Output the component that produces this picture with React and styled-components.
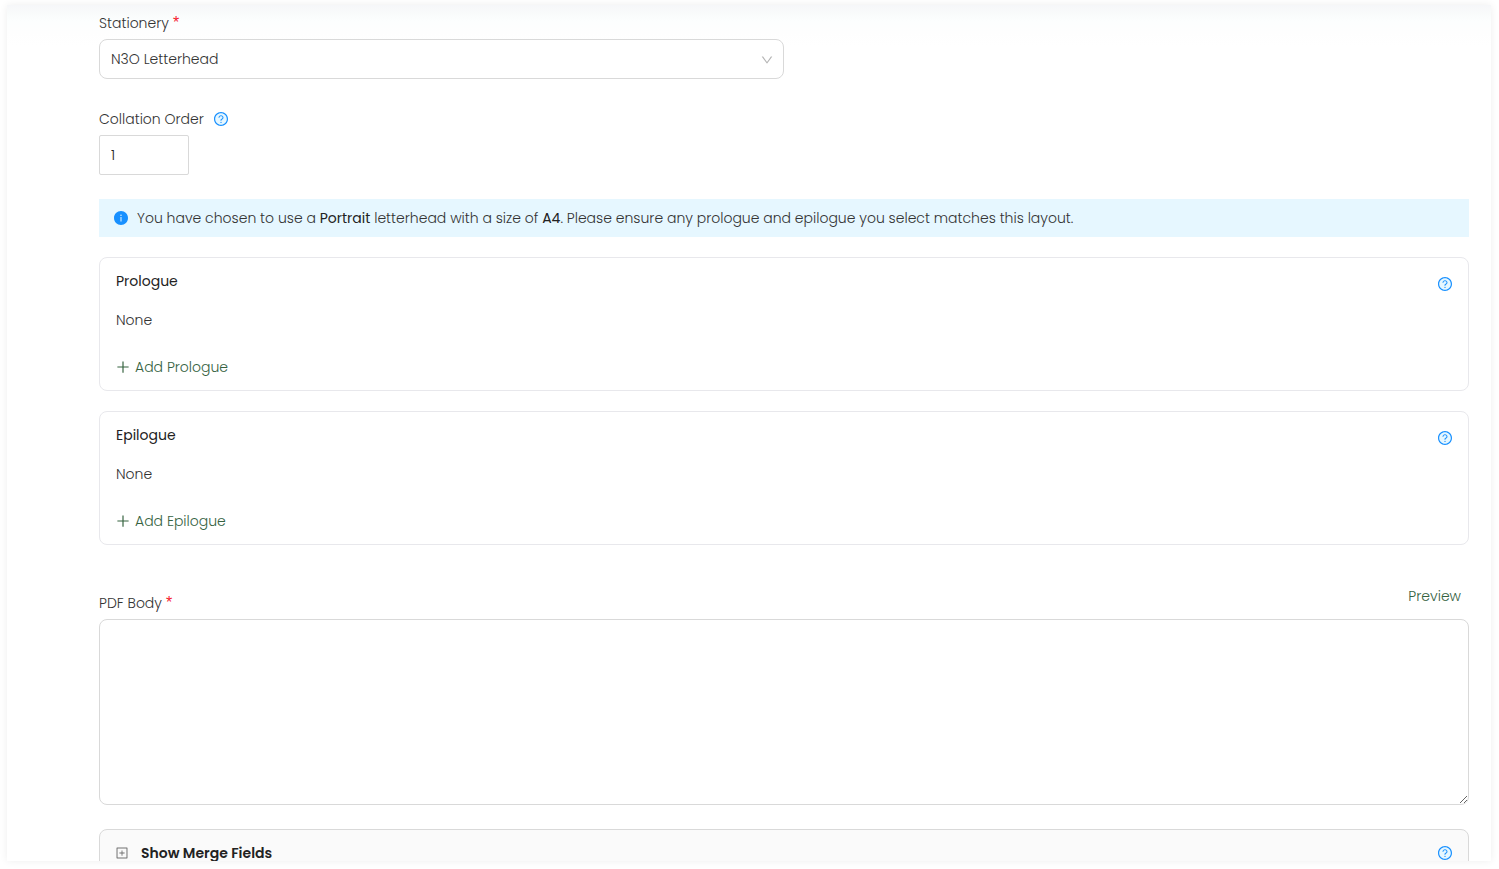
import React, { useState } from "react";
import styled, { createGlobalStyle } from "styled-components";
import {
  AiFillInfoCircle,
  AiOutlineDown,
  AiOutlinePlus,
  AiOutlinePlusSquare,
  AiOutlineQuestionCircle,
} from "react-icons/ai";

const GlobalStyle = createGlobalStyle`
  * {
    box-sizing: border-box;
  }

  body {
    margin: 0;
    background: #fff;
    color: #333;
    font-family: Poppins, Inter, sans-serif;
    font-size: 14px;
    font-weight: 300;
    line-height: 22px;
  }

  button, input, select, textarea {
    font: inherit;
    color: inherit;
  }
`;

const Page = styled.div`
  height: 100vh;
  padding: 5px 8px 8px 7px;
  overflow: hidden;
`;

const Panel = styled.main`
  height: 100%;
  padding: 7px 22px 0 92px;
  overflow: hidden;
  background: linear-gradient(#f6f7f9, #f9fbfb 8px, #fcfefe 16px, #fefefe 28px, #fff 40px);
  box-shadow: 0 0 8px rgba(0, 0, 0, 0.07);
`;

const Field = styled.div`
  display: flex;
  flex-direction: column;
  align-items: flex-start;
  gap: 5px;
  margin-bottom: ${(props) => props.$space || 24}px;
`;

const LabelRow = styled.div`
  display: flex;
  align-items: center;
  gap: 9px;
`;

const BodyHeader = styled.div`
  display: flex;
  justify-content: space-between;
  width: 100%;
`;

const Label = styled.label`
  display: flex;
  gap: 4px;
`;

const BodyLabel = styled(Label)`
  padding-top: 7px;
`;

const Required = styled.span`
  color: #f5222d;
  font-family: "Liberation Sans", sans-serif;
  font-size: 16px;
  font-weight: 400;
`;

const SelectWrapper = styled.div`
  position: relative;
  width: 50%;

  svg {
    position: absolute;
    top: 14px;
    right: 10px;
    color: #b4b4b4;
    pointer-events: none;
  }
`;

const Select = styled.select`
  display: block;
  width: 100%;
  height: 40px;
  padding: 0 32px 0 11px;
  border: 1px solid #d9d9d9;
  border-radius: 8px;
  background: #fff;
  appearance: none;
`;

const NumberInput = styled.input`
  width: 90px;
  height: 40px;
  padding: 0 11px;
  border: 1px solid #d9d9d9;
  border-radius: 2px;
  background: #fff;
  color: #222;
`;

const TextArea = styled.textarea`
  display: block;
  width: 100%;
  height: 186px;
  padding: 8px 11px;
  border: 1px solid #d9d9d9;
  border-radius: 8px;
  background: #fff;
  resize: vertical;
`;

const HelpButton = styled.button`
  display: flex;
  padding: 0;
  border: none;
  background: radial-gradient(circle, #e6f7ff 6px, transparent 7px);
  color: #1890ff;
  cursor: pointer;
`;

const Alert = styled.div`
  display: flex;
  align-items: center;
  gap: 8px;
  margin-bottom: 20px;
  padding: 8px 14px;
  background: #e6f7ff;

  svg {
    flex: none;
    color: #1890ff;
  }

  p {
    margin: 0;
  }

  strong {
    color: #222;
    font-weight: 400;
  }
`;

const Card = styled.section`
  margin-bottom: ${(props) => props.$space || 20}px;
  padding: 12px 15px 12px 16px;
  border: 1px solid #e8e8ec;
  border-radius: 8px;
`;

const CardHeader = styled.div`
  display: flex;
  align-items: flex-end;
  justify-content: space-between;
`;

const CardTitle = styled.h3`
  margin: 0;
  color: #222;
  font-size: 14px;
  font-weight: 400;
`;

const CardText = styled.p`
  margin: 17px 0 25px;
`;

const AddButton = styled.button`
  display: flex;
  align-items: center;
  gap: 4px;
  margin-left: -1px;
  padding: 0;
  border: none;
  background: none;
  color: #35623f;
  cursor: pointer;
`;

const PreviewLink = styled.a`
  padding-right: 8px;
  color: #35623f;
  text-decoration: none;
`;

const MergePanel = styled.div`
  display: flex;
  align-items: center;
  justify-content: space-between;
  padding: 12px 15px;
  border: 1px solid #d9d9d9;
  border-radius: 8px 8px 0 0;
  background: #fafafa;
`;

const MergeToggle = styled.button`
  display: flex;
  align-items: center;
  gap: 12px;
  padding: 0;
  border: none;
  background: none;
  color: #222;
  font-weight: 600;
  cursor: pointer;

  svg {
    color: #707070;
  }
`;

const Help = ({ topic }) => (
  <HelpButton type="button" aria-label={`Help: ${topic}`}>
    <AiOutlineQuestionCircle size={16} />
  </HelpButton>
);

const AttachmentCard = ({ title, space }) => (
  <Card $space={space}>
    <CardHeader>
      <CardTitle>{title}</CardTitle>
      <Help topic={title} />
    </CardHeader>
    <CardText>None</CardText>
    <AddButton type="button">
      <AiOutlinePlus size={16} />
      Add {title}
    </AddButton>
  </Card>
);

const App = () => {
  const [order, setOrder] = useState("1");
  const [body, setBody] = useState("");

  return (
    <>
      <GlobalStyle />
      <Page>
        <Panel>
          <Field $space={29}>
            <Label htmlFor="stationery">
              Stationery <Required>*</Required>
            </Label>
            <SelectWrapper>
              <Select id="stationery" defaultValue="n3o">
                <option value="n3o">N3O Letterhead</option>
              </Select>
              <AiOutlineDown size={14} />
            </SelectWrapper>
          </Field>

          <Field>
            <LabelRow>
              <Label htmlFor="collation">Collation Order</Label>
              <Help topic="Collation Order" />
            </LabelRow>
            <NumberInput
              id="collation"
              type="number"
              value={order}
              onChange={(e) => setOrder(e.target.value)}
            />
          </Field>

          <Alert>
            <AiFillInfoCircle size={16} />
            <p>
              You have chosen to use a <strong>Portrait</strong> letterhead with
              a size of <strong>A4</strong>. Please ensure any prologue and
              epilogue you select matches this layout.
            </p>
          </Alert>

          <AttachmentCard title="Prologue" />
          <AttachmentCard title="Epilogue" space={40} />

          <Field>
            <BodyHeader>
              <BodyLabel htmlFor="pdf-body">
                PDF Body <Required>*</Required>
              </BodyLabel>
              <PreviewLink href="#">Preview</PreviewLink>
            </BodyHeader>
            <TextArea
              id="pdf-body"
              value={body}
              onChange={(e) => setBody(e.target.value)}
            />
          </Field>

          <MergePanel>
            <MergeToggle type="button" aria-expanded="false">
              <AiOutlinePlusSquare size={14} />
              Show Merge Fields
            </MergeToggle>
            <Help topic="Merge Fields" />
          </MergePanel>
        </Panel>
      </Page>
    </>
  );
};

export default App;
